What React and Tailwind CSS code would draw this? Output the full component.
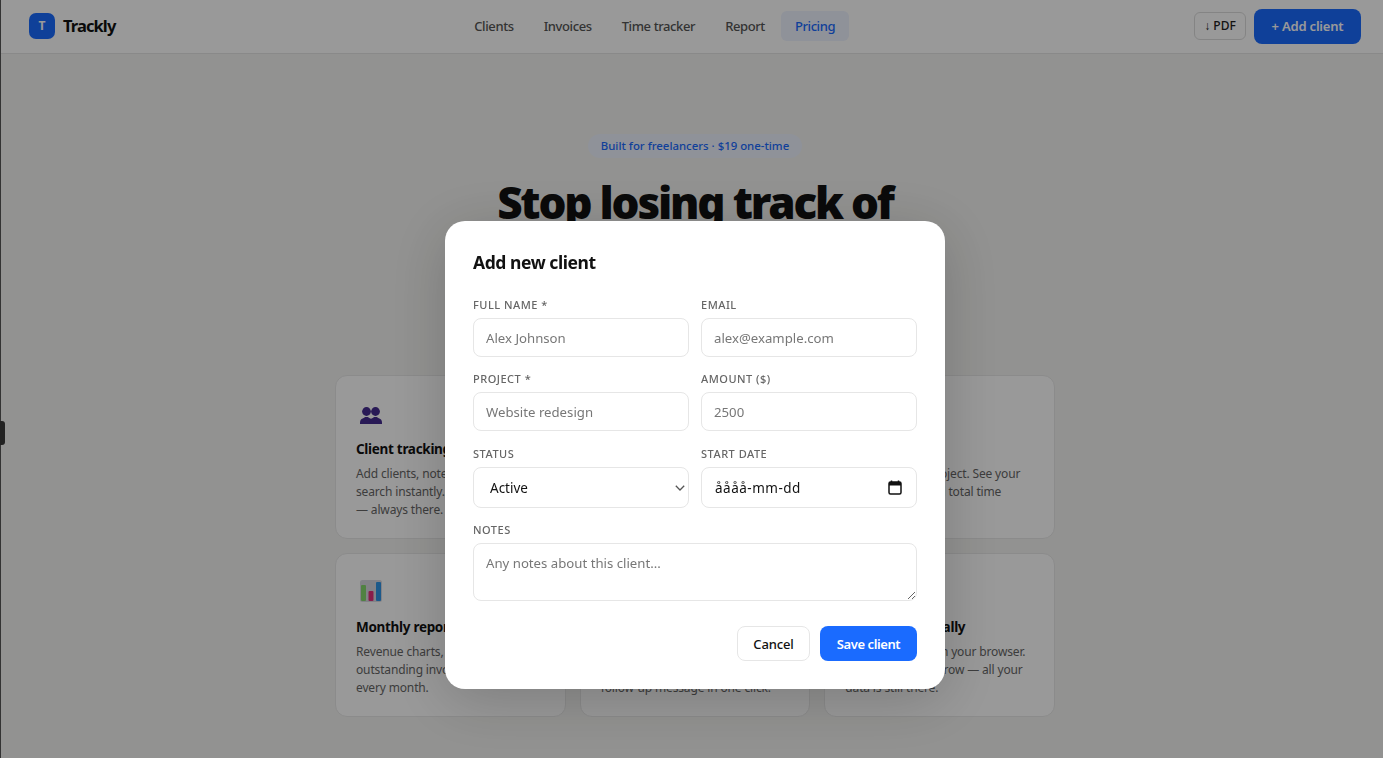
import React from 'react';

const font = "font-['Noto_Sans','Open_Sans',sans-serif]";

const navLinks = ['Clients', 'Invoices', 'Time tracker', 'Report', 'Pricing'];

const PeopleIcon = () => (
  <svg width="22" height="17" viewBox="0 0 22 17" fill="#452c8f" className="mt-[5px]">
    <circle cx="6.500" cy="4.500" r="4.400" />
    <path d="M0 17c0-1.500 0-3.500 1-4.500 1.500-1 3-1.500 4-2.500h3c1 1 2.500 1.500 4 2.500 1 1 1 3 1 4.500z" />
    <circle cx="15.500" cy="4.500" r="4.400" />
    <path d="M9 17c0-1.500 0-3.500 1-4.500 1.500-1 3-1.500 4-2.500h3c1 1 2.500 1.500 4 2.500 1 1 1 3 1 4.500z" />
  </svg>
);

const ChartIcon = () => (
  <svg width="22" height="22" viewBox="0 0 22 22">
    <rect width="22" height="22" rx="2.500" fill="#d9d9e2" />
    <rect x="1" y="5" width="5" height="16" rx="1" fill="#86d86e" />
    <rect x="8.500" y="11" width="5" height="10" rx="1" fill="#e5307c" />
    <rect x="16" y="2" width="5" height="19" rx="1" fill="#2f95e6" />
  </svg>
);

const features = [
  { title: 'Client tracking', icon: <PeopleIcon />, lines: ['Add clients, notes and projects,', 'search instantly. Your list stays', '— always there.'] },
  { title: 'Invoices', lines: ['Create invoices in seconds and', 'print or save them as PDF files', 'whenever you need'] },
  { title: 'Time tracker', lines: ['Timer for each project. See your', 'hours tracked and total time', 'at once.'] },
  { title: 'Monthly reports', icon: <ChartIcon />, lines: ['Revenue charts, totals and your', 'outstanding invoices, updated', 'every month.'] },
  { title: 'Payment reminders', lines: ['See who is late and send a', 'polite reminder with a ready', 'follow-up message in one click.'] },
  { title: 'Data stored locally', lines: ['Everything stays in your browser.', 'Come back tomorrow — all your', 'data is still there.'] },
];

const Label = ({ children }) => (
  <label className="block text-[11px] leading-[17px] font-medium tracking-[0.5px] uppercase text-[#666666] mb-[5px]">
    {children}
  </label>
);

const inputCls =
  'block w-full h-[39px] border border-[#e6e6e6] rounded-[8px] px-3 text-[13.200px] text-[#111111] bg-white placeholder:text-[#777777] outline-none';

const Field = ({ label, placeholder }) => (
  <div>
    <Label>{label}</Label>
    <input type="text" placeholder={placeholder} className={inputCls} />
  </div>
);

export default function App() {
  return (
    <div className={`h-screen overflow-hidden bg-[#f4f4f2] border-l border-[#555555] ${font}`}>
      <header className="h-[54px] bg-white border-b border-[#e4e4e4] pl-[28px] pr-[22px] pb-[1px] flex items-center justify-between">
        <div className="flex items-center gap-2">
          <div className="w-[26px] h-[26px] rounded-[7px] bg-[#1a6bff] text-white text-[12px] font-bold flex items-center justify-center">T</div>
          <span className="text-[16.500px] font-bold tracking-[-0.9px] text-[#111111]">Trackly</span>
        </div>
        <nav className="flex items-center gap-[2px]">
          {navLinks.map((link) => (
            <a
              key={link}
              className={
                link === 'Pricing'
                  ? 'h-[30px] px-[14px] pt-[1px] rounded-[6px] flex items-center text-[13px] font-medium tracking-[-0.4px] bg-[#eef3ff] text-[#1a6bff]'
                  : 'h-[30px] px-[14px] pt-[1px] rounded-[6px] flex items-center text-[13px] font-medium tracking-[-0.4px] text-[#555555]'
              }
            >
              {link}
            </a>
          ))}
        </nav>
        <div className="flex items-center gap-2">
          <button className="h-[28px] w-[52px] border border-[#dddddd] rounded-[6px] text-[12px] font-medium text-[#222222]">↓ PDF</button>
          <button className="h-[35px] w-[107px] pt-[1px] rounded-[8px] bg-[#1a6bff] text-white text-[13px] font-semibold tracking-[-0.2px]">+ Add client</button>
        </div>
      </header>

      <main className="pl-[6px]">
        <section className="h-[321px] pt-[80px] flex flex-col items-center">
          <div className="h-[24px] px-[13px] rounded-full bg-[#eef3ff] text-[#1a6bff] text-[11.400px] font-medium flex items-center">
            Built for freelancers · $19 one-time
          </div>
          <h1 className="mt-[19px] text-[44px] leading-[50px] font-black tracking-[-2.2px] text-[#111111] text-center">
            Stop losing track of
            <br />
            your clients
          </h1>
        </section>

        <section className="w-[720px] mx-auto grid grid-cols-3 gap-[14px]">
          {features.map((f) => (
            <div key={f.title} className="h-[164px] bg-white border border-[#e8e8e8] rounded-[12px] px-5 pt-[26px]">
              <div className="h-[24px] pl-1 flex items-start">{f.icon}</div>
              <h3 className="mt-[13px] text-[13.500px] leading-[20px] font-bold tracking-[-0.3px] text-[#111111] whitespace-nowrap">{f.title}</h3>
              <p className="mt-[6px] text-[12px] leading-[18px] tracking-[-0.15px] text-[#666666] whitespace-nowrap">
                {f.lines.map((line) => (
                  <span key={line} className="block">{line}</span>
                ))}
              </p>
            </div>
          ))}
        </section>
      </main>

      {/* overlay + modal */}
      <div className="fixed inset-0 z-10 bg-black/40 flex justify-center items-start pt-[221px] pl-[7px]">
        <div className="w-[500px] h-[468px] bg-white rounded-[20px] px-[28px] pt-[28px] shadow-[0_10px_60px_rgba(0,0,0,0.2)]">
          <h2 className="text-[17.500px] leading-[26px] font-bold tracking-[-0.43px] text-[#111111] mb-[21px]">Add new client</h2>
          <div className="grid grid-cols-2 gap-x-3 gap-y-[13.400px]">
            <Field label="Full name *" placeholder="Alex Johnson" />
            <Field label="Email" placeholder="alex@example.com" />
            <Field label="Project *" placeholder="Website redesign" />
            <Field label="Amount ($)" placeholder="2500" />
            <div>
              <Label>Status</Label>
              <div className="relative">
                <select className="block w-full h-[41px] appearance-none border border-[#e6e6e6] rounded-[8px] pl-4 pr-6 pt-[1px] text-[13.500px] text-[#111111] bg-white outline-none">
                  <option>Active</option>
                </select>
                <svg width="10" height="6" viewBox="0 0 10 6" fill="none" className="absolute right-[4px] top-[18px]">
                  <path d="M0.800 0.800L5 5L9.200 0.800" stroke="#555555" strokeWidth="1.300" />
                </svg>
              </div>
            </div>
            <div>
              <Label>Start date</Label>
              <div className="h-[41px] border border-[#e6e6e6] rounded-[8px] pl-[13px] pr-[14px] flex items-center justify-between text-[13.500px] tracking-[0.5px] text-[#111111]">
                <span className="mt-[1px]">åååå-mm-dd</span>
                <svg width="14" height="15" viewBox="0 0 14 15" fill="none">
                  <path d="M3.500 0.500v2M10.500 0.500v2" stroke="#111" strokeWidth="1.500" />
                  <rect x="1" y="2" width="12" height="12" rx="1.500" stroke="#111" strokeWidth="1.500" />
                  <rect x="1" y="2" width="12" height="3.500" fill="#111" />
                </svg>
              </div>
            </div>
            <div className="col-span-2">
              <Label>Notes</Label>
              <textarea placeholder="Any notes about this client..." className="block w-full h-[58px] border border-[#e6e6e6] rounded-[8px] px-3 pt-[10px] pb-2 text-[13.200px] text-[#111111] placeholder:text-[#777777] outline-none" />
            </div>
          </div>
          <div className="mt-[25px] flex justify-end gap-[10px]">
            <button className="w-[73px] h-[35px] pt-[2px] border border-[#e6e6e6] rounded-[8px] bg-white text-[13px] font-medium tracking-[-0.15px] text-[#111111]">Cancel</button>
            <button className="w-[97px] h-[35px] pt-[2px] rounded-[8px] bg-[#1a6bff] text-white text-[13px] font-semibold tracking-[-0.4px]">Save client</button>
          </div>
        </div>
      </div>

      {/* handle stuck on the window edge */}
      <div className="fixed z-20 left-0 top-[421px] w-[5px] h-[24px] rounded-r-[3px] bg-[#222222]" />
    </div>
  );
}
